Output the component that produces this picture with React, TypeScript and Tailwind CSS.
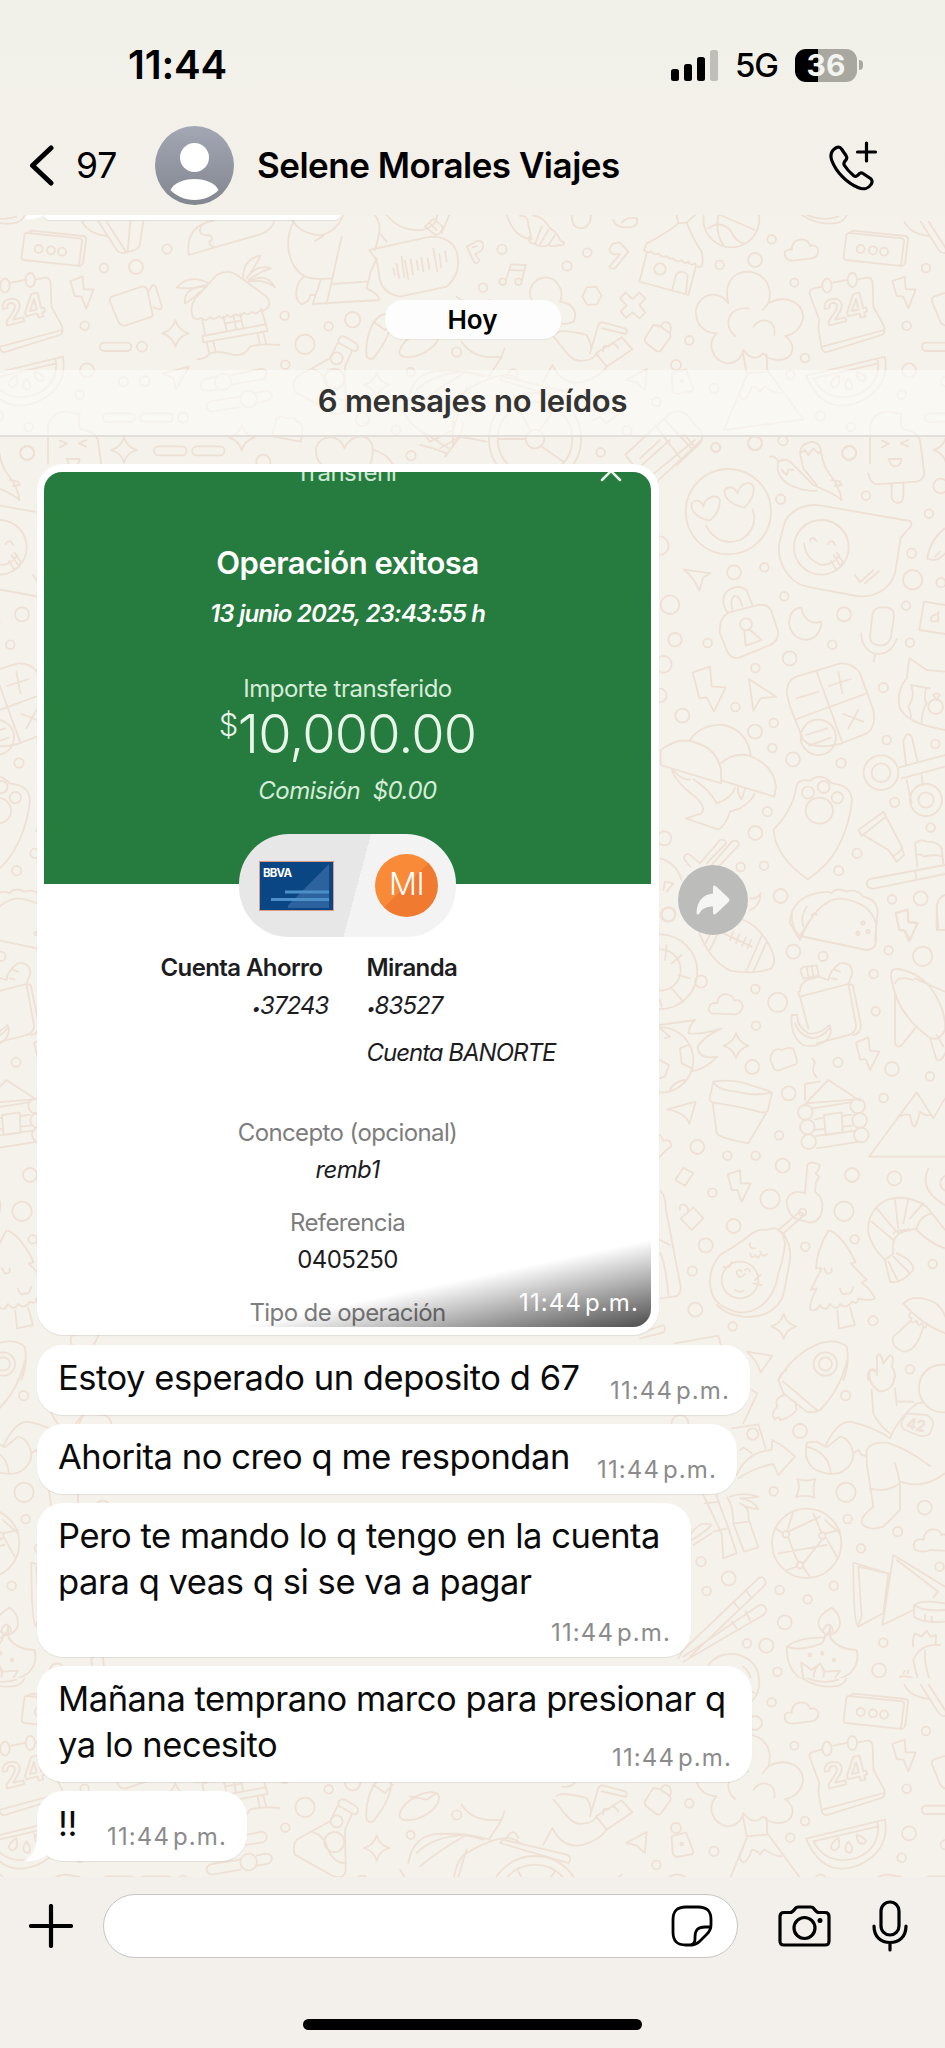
import type { ReactNode } from "react";

type Circle = [number, number, number];

interface Doodle {
  x: number;
  y: number;
  circles: Circle[];
  sparkles?: Circle[];
  paths: string[];
}

// Wallpaper doodles, drawn at 3x and scaled down in <Wallpaper />
const doodles: Doodle[] = [
  {
    x: 0,
    y: 200,
    circles: [
      [408, 201, 21], [501, 147, 14], [854, 347, 13], [986, 379, 13], [1058, 359, 23], [915, 433, 29],
      [856, 494, 13], [426, 440, 15], [370, 545, 14], [434, 543, 15], [549, 653, 15], [1087, 658, 20],
      [1188, 689, 13], [1233, 767, 14], [1232, 516, 12], [790, 785, 21], [669, 545, 25], [746, 597, 25],
      [1010, 475, 18], [1003, 537, 30],
    ],
    sparkles: [[526, 400, 40], [372, 750, 38], [725, 713, 38], [1130, 555, 38]],
    paths: [
      "M247 65Q262 100 320 108M296 65L350 150Q360 162 375 158L405 150Q418 145 420 130L430 65M320 65L378 155M391 65L383 155",
      "M640 62C570 75 560 120 566 165L780 103Q815 90 822 65M623 65C590 80 595 105 618 105C640 105 640 120 628 125Q628 138 642 141",
      "M880 65C850 130 865 200 915 230M870 45Q890 100 960 106Q1010 95 1030 45M1025 110L980 312M945 123L970 108M915 230Q940 240 995 235",
      "M1125 45C1150 80 1135 110 1125 150M912 230C885 250 880 300 905 313Q930 305 930 285L945 285M962 240L938 312L1138 300Q1140 285 1100 265L1112 215L1130 175M1000 252L1100 245",
      "M1108 150L1290 110Q1350 110 1368 150Q1390 215 1340 260L1200 290Q1150 280 1140 240L1130 180Z",
      "M1180 205l4 20M1190 192l7 42M1205 170l8 62M1215 182l10 56M1232 178l7 46M1250 182l5 28M1264 172l6 42M1283 175l5 32M1300 145l12 70M1318 162l6 40M1335 155l5 30",
      "M1160 45Q1200 95 1265 90Q1310 80 1312 45M1275 80l25-25l28 25q0 20-22 25zM1290 70l20 20",
      "M1140 100L1160 125M1325 100L1348 45",
      "M578 350Q565 310 600 280L650 225Q685 205 715 228L800 290Q815 310 803 325M578 350q12 15 25 3q12 15 27-2q13 13 27-3q12 13 25-3q12 12 25-3q12 12 25-4q12 11 24-3q12 11 22-2q14 3 25-12",
      "M607 360L615 405M783 325L797 372M670 350L680 392M720 340L730 385M675 370L725 362M700 345L708 387",
      "M607 408L797 373L803 393L610 427ZM620 427L628 460M640 425L648 458M773 402L780 435M790 398L798 430M592 478Q620 475 628 462Q650 450 690 462Q730 475 750 440Q780 430 838 435",
      "M730 238Q725 180 782 166Q765 200 745 228M740 235Q770 190 812 205Q780 215 745 240M745 245Q800 215 825 262Q790 235 745 245M625 250Q570 220 530 262Q570 270 615 255M620 260Q550 260 555 310Q575 300 600 275",
      "M335 290L425 260Q438 258 442 270L458 345Q458 350 450 352L375 377Q362 378 355 365L330 305Q328 293 335 290M445 275L458 255Q465 255 467 260L486 320Q485 328 478 328L460 322",
      "M312 428H382a12 12 0 0 1 0 25H312a12 12 0 0 1 0-25ZM322 640H392a13 13 0 0 1 0 26H322a13 13 0 0 1 0-26ZM434 640H505a13 13 0 0 1 0 26H434a13 13 0 0 1 0-26ZM476 739H546a13 13 0 0 1 0 27H476a13 13 0 0 1 0-27ZM590 739H660a13 13 0 0 1 0 27H590a13 13 0 0 1 0-27Z",
      "M488 520L567 500L527 570Q525 545 520 535Z",
      "M650 530L615 537Q600 545 602 560Q606 572 620 572L655 568M695 525L780 507Q798 505 800 520Q800 535 788 538L695 553M720 590L635 603Q618 608 620 622Q625 635 637 635L722 620M770 578L795 572Q815 572 816 587Q812 600 800 603L768 608",
      "M1015 420Q1020 405 1035 410L1068 430Q1078 440 1072 450Q1066 456 1055 450L1018 430ZM1012 430L990 475L890 530Q875 550 885 575L1000 640Q1035 650 1037 620L1035 500L1055 455M940 508Q970 515 985 560Q1000 600 1035 600",
      "M1100 470C1095 430 1110 350 1155 342C1185 345 1180 400 1120 475Q1105 480 1100 470M1198 455C1210 410 1290 370 1315 395C1330 430 1260 480 1210 470Q1198 465 1198 455M1120 365L1155 390L1178 365M1230 400L1280 410L1310 390",
      "M830 655Q845 645 862 655Q885 650 890 665Q908 668 908 685L902 725L820 710Q815 690 825 680Z",
      "M1033 745C1020 700 960 700 948 745Q945 775 965 795M1033 745C1055 695 1115 700 1118 745Q1120 770 1110 795",
      "M1225 600Q1240 510 1330 512Q1390 512 1450 530M1200 620Q1235 680 1260 690L1345 745M1250 570Q1300 520 1400 515Q1320 560 1260 610M1260 690L1290 725L1360 690L1400 560M1260 735L1300 745L1340 760M1120 750Q1160 760 1180 795",
    ],
  },
  {
    x: 440,
    y: 200,
    circles: [
      [186, 148, 14], [129, 263, 13], [381, 198, 14], [442, 158, 13], [660, 207, 17], [839, 195, 13],
      [945, 180, 21], [995, 118, 13], [1063, 248, 12], [1262, 147, 12], [1299, 151, 12], [1332, 155, 12],
      [1458, 204, 13], [1400, 377, 13], [1095, 474, 13], [1051, 524, 13], [1407, 511, 21], [1385, 584, 13],
      [1141, 648, 14], [1232, 681, 13], [1228, 759, 21], [945, 729, 21], [1029, 722, 14], [827, 743, 14],
      [822, 565, 14], [649, 606, 13], [561, 692, 14], [482, 757, 13], [748, 421, 13], [50, 456, 14],
      [285, 717, 28], [285, 717, 138], [285, 717, 112], [188, 245, 10], [235, 245, 10], [874, 58, 84],
      [708, 495, 15], [725, 543, 4],
    ],
    paths: [
      "M257 717H173M298 692L345 625M303 738L370 785M272 692L235 625",
      "M80 140L112 123Q130 120 130 140Q125 155 105 162L118 180Q115 192 103 188ZM98 142L112 138",
      "M198 240L213 193L257 195L246 240M211 210L254 212",
      "M200 45C215 90 240 115 275 118L265 75Q265 45 240 48M268 110Q262 130 285 132Q305 145 325 135Q340 142 355 135Q375 138 372 128L360 120Q350 95 330 85Q305 45 280 48M285 132L305 80M300 132L325 90M325 135L345 105",
      "M395 45Q395 85 425 85Q452 82 453 45M520 60Q525 85 570 82Q598 78 590 55Q560 50 545 68",
      "M508 200L540 163Q510 165 508 148Q515 125 540 128L565 155L525 205Q512 208 508 200",
      "M612 150L620 130Q680 100 715 70L740 68Q760 120 785 155Q792 190 783 200Q770 205 765 190Q752 200 745 185Q735 195 725 180Q710 190 700 175Q690 180 680 168Q665 175 655 160Q640 168 635 155Q620 160 612 150M620 160L598 245L745 285L768 198M697 270L708 225Q725 205 743 225L738 280M715 70L710 45M740 68L765 45",
      "M835 45Q825 100 850 135M840 45L945 90M805 85Q840 60 870 90Q890 130 915 130",
      "M1045 180Q1030 170 1035 155Q1045 145 1055 150Q1055 120 1085 118Q1108 120 1110 138Q1130 132 1135 150Q1135 172 1115 175L1060 182Z",
      "M1228 99L1386 115Q1393 117 1392 124L1384 190Q1382 198 1374 197L1218 180Q1210 178 1211 170L1219 106Q1221 98 1228 99M1228 99L1239 92L1396 108Q1405 110 1404 118L1396 186Q1392 198 1382 199",
      "M1085 45Q1140 80 1195 68Q1215 60 1220 45M1100 45Q1150 65 1195 50",
      "M1138 360L1110 285Q1105 270 1120 266L1145 260M1180 248L1220 240M1255 238L1285 232Q1297 235 1298 250L1300 320L1332 378Q1338 400 1325 405L1165 455Q1150 460 1145 445L1135 385L1138 360M1147 440L1332 390",
      "M1147 257a14 21 0 1 0 28 0a14 21 0 1 0-28 0M1223 240a14 21 0 1 0 28 0a14 21 0 1 0-28 0",
      "M1357 243L1394 230L1397 268L1427 268L1405 325L1390 290L1370 288Z",
      "M1098 527L1335 470Q1350 560 1260 605Q1150 650 1098 527M1120 535L1315 490Q1315 560 1250 585Q1160 610 1120 535M1195 525Q1160 550 1180 562Q1205 560 1195 525M1225 535Q1205 565 1230 570Q1245 560 1225 535M1250 515Q1250 545 1272 542Q1290 530 1250 515M1312 478L1315 490",
      "M865 310C850 250 880 215 925 215C975 220 1000 260 985 310C1030 285 1085 300 1090 350C1085 385 1060 405 1035 408C1070 430 1065 480 1015 480Q985 480 970 460Q940 490 910 450Q900 490 860 490C815 480 800 430 830 400C790 400 765 370 768 330C780 275 840 270 865 310M885 408C850 380 860 320 925 325M940 380C960 350 1010 355 1003 405M985 310L968 330M908 455L920 520L982 515L980 465",
      "M920 525L852 690L1090 658L985 515M910 555Q890 590 910 598Q925 595 935 560Q950 560 960 575Q970 560 975 560Q1000 580 1025 580",
      "M275 298C260 270 280 235 315 232C350 232 375 270 360 305C400 310 415 340 400 365Q380 375 365 370",
      "M440 262L468 260L485 287L470 313L442 314L427 290Z",
      "M540 295L556 277L578 297L598 277L616 295L598 315L616 338L598 355L578 337L558 354L542 335L560 316Z",
      "M450 460L475 375Q480 365 490 368L555 385Q565 392 558 402L485 385M468 460L545 412L577 448L500 500ZM490 455Q485 430 505 440Q520 420 535 445M350 400Q360 385 440 405Q460 440 450 460M340 410C370 440 390 490 430 482Q460 480 470 460",
      "M65 425Q100 480 185 470L150 525M185 470L193 445M310 545L337 495Q370 560 430 545Q480 530 500 500",
      "M0 515Q50 505 150 530M50 290Q80 320 150 300M40 740Q30 600 80 570Q200 500 240 540M180 540L385 600Q400 585 380 575L190 530ZM200 525Q220 490 235 525",
      "M615 415L640 375L660 378L690 400Q695 410 685 420L662 452Q655 458 645 450L620 430Q612 425 615 415M665 375Q670 362 685 368Q698 380 690 398",
      "M695 520L738 508L760 565Q760 575 750 575L710 582Q700 580 698 570Z",
      "M558 540L620 507L615 570Q600 560 592 548Z",
      "M555 765L690 640Q720 625 745 650L780 690Q795 715 775 735L710 795M645 675L725 780M560 770L580 795M670 655L755 745",
      "M460 660L480 650L500 670L545 635M0 745L60 710L140 725M15 770L60 710L70 670",
      "M1290 790L1290 680Q1300 635 1345 635L1385 642Q1375 690 1400 690Q1430 695 1440 720L1450 795M1325 722L1347 731L1325 742M1405 720L1382 730L1405 740M1345 777L1385 777Q1382 799 1365 799Q1350 799 1348 777",
    ],
  },
  {
    x: 640,
    y: 440,
    circles: [
      [227, 22, 13], [345, 10, 21], [627, 39, 21], [265, 215, 128], [422, 178, 14], [678, 167, 13],
      [867, 221, 13], [815, 340, 14], [818, 419, 29], [903, 428, 14], [58, 317, 28], [282, 397, 21],
      [373, 382, 13], [544, 322, 82], [433, 469, 13], [90, 494, 28], [612, 523, 21], [798, 497, 13],
      [810, 608, 13], [577, 614, 13], [105, 599, 20], [203, 609, 13], [449, 655, 21], [346, 684, 13],
      [70, 673, 25], [60, 766, 20], [730, 743, 14], [286, 801, 13], [127, 827, 21], [401, 849, 13],
      [345, 875, 21], [397, 924, 13], [459, 958, 21], [603, 969, 14], [740, 900, 13], [886, 912, 13],
      [535, 892, 53], [382, 1115, 14], [346, 1179, 21], [73, 1195, 21], [764, 1087, 14], [872, 1163, 13],
      [651, 1240, 14], [596, 1292, 14], [422, 1368, 21], [372, 1277, 13], [302, 1281, 13], [756, 1378, 13],
      [842, 1375, 21], [86, 1423, 21], [723, 998, 52], [723, 998, 28], [858, 1080, 48], [858, 1080, 23],
      [902, 138, 22], [504, 1058, 18], [551, 1041, 18], [592, 1073, 17], [318, 553, 18], [669, 1449, 5],
      [654, 1480, 5], [684, 1475, 5], [887, 800, 22],
    ],
    paths: [
      "M0 55L60 0M0 80L90 0M30 110L165 0M45 130L185 0M130 -20L160 15",
      "M685 100Q690 130 710 133L830 125Q855 118 853 95L848 70M755 135V175Q765 195 785 185Q792 180 790 130",
      "M390 50Q405 45 415 65Q440 50 460 75L520 135Q590 165 605 180Q600 140 560 90Q545 60 542 25Q530 0 505 8Q480 15 480 40L490 85L530 135M415 65Q405 110 450 135Q490 155 530 152M480 40L495 30L505 45L520 25L535 40L543 30M425 90L440 105L445 88L460 90M575 120L600 125L605 135L585 138",
      "M210 242C170 235 150 210 155 190C165 175 185 182 190 200C195 170 230 160 240 180C240 205 230 225 210 242ZM313 202C270 195 250 170 255 150C265 135 285 142 293 160C298 128 335 120 341 142C342 165 333 185 313 202ZM198 257C220 300 260 315 300 300C340 280 350 240 338 208",
      "M430 260C440 215 490 190 540 196L810 243Q818 250 812 260L782 293L765 400C750 450 700 475 650 468L500 440C440 425 410 360 418 310Z",
      "M493 310Q495 355 540 373Q575 380 598 345M510 303Q515 285 530 303M563 312Q575 292 585 315M590 338L608 365Q605 385 588 387L573 363M580 345L600 375M645 405L660 427L700 390M675 430L717 393",
      "M130 388L212 400L190 412L178 452Q160 410 130 388",
      "M262 517Q238 480 260 455Q290 430 320 450L337 495M277 508Q270 480 282 468Q300 465 307 500M265 518L355 495Q385 490 395 515L413 570Q420 600 390 615L300 652Q275 660 262 635L240 580Q235 535 265 518M313 570L317 617L365 600L327 567",
      "M483 503Q450 505 447 550C455 600 500 608 525 590Q545 570 544 545Q500 560 483 503",
      "M718 502H740Q762 505 762 530L752 595Q740 620 715 616Q688 610 690 590L697 525Q702 505 718 502M664 580Q662 620 700 640Q750 650 770 597M706 642L701 665",
      "M862 355Q870 300 915 265M862 355Q890 370 915 340M885 350L900 335M915 582L838 570L852 485L915 495M895 522Q870 525 873 540Q880 550 895 540V515V545",
      "M158 697L210 680L215 740L257 742L222 815L200 772L178 775Z",
      "M327 717L408 770L362 775L340 812Z",
      "M440 760Q440 720 470 710L600 670Q640 668 660 700L700 810Q710 860 680 880L600 912Q520 930 490 900L450 800ZM530 695L607 908M470 837L675 762M470 775L535 755M567 738L632 717M595 695L607 760M610 822L670 845M625 865L655 810M498 885L562 865M507 917L572 893",
      "M778 800Q770 750 800 715L808 655L860 690L915 695M778 800Q795 850 915 870M812 735L870 745M815 740Q825 770 805 800Q815 820 812 835M858 745Q850 780 860 790Q845 815 845 845M880 765Q890 755 900 765L890 780Z",
      "M148 902Q185 850 250 855Q320 870 332 945M62 930Q110 895 150 903Q230 920 243 990V1030L62 975ZM243 970Q275 940 320 945Q400 970 408 1040L403 1070L245 1022M95 990Q110 1030 165 1070Q200 1100 185 1120L137 1135L235 1168Q255 1160 270 1115L300 1105Q340 1080 343 1060M160 1018Q210 1050 230 1090Q275 1075 285 1045M295 1040Q290 1060 305 1078L315 1048M100 990Q130 1025 150 1018",
      "M497 1112a40 38 0 1 0 82 0a40 38 0 1 0-82 0M401 1168Q460 1110 470 1035Q480 1015 510 1022Q545 995 575 1030Q640 1035 635 1090Q620 1200 560 1270Q530 1300 503 1318Q405 1250 401 1168",
      "M778 982L915 945M785 1015L915 980M798 975L790 905Q800 870 815 890L833 965M800 1020L815 1090M845 1005L848 1035",
      "M655 1170L730 1115L738 1130L665 1188ZM670 1185L745 1230L760 1250L788 1225L738 1130M755 1245L770 1265L792 1245L785 1225",
      "M915 1275L690 1317Q675 1325 683 1340Q690 1348 705 1345L915 1302M825 1292L830 1318M832 1280L825 1210Q840 1195 860 1205Q895 1205 905 1225L910 1270M830 1245Q845 1240 850 1250Q890 1240 905 1250",
      "M133 1258Q130 1240 148 1243L180 1270L240 1200Q255 1195 258 1210L200 1270M133 1258L150 1280M215 1275L275 1205Q295 1195 297 1215L240 1275",
      "M450 1450Q450 1390 510 1365Q560 1350 575 1360Q590 1340 620 1355Q650 1345 670 1370Q715 1380 713 1420L705 1500M450 1450L480 1500Q530 1380 600 1375Q690 1385 708 1450M500 1400Q480 1430 490 1460M515 1425q10-10 15 0",
      "M767 1418L803 1408L805 1445L833 1448L810 1500L795 1472L778 1470ZM890 1400Q895 1370 915 1365M890 1400L895 1470H915M62 1255Q110 1270 125 1320M70 1350L75 1325L100 1330L80 1355M330 1375Q350 1380 362 1360Q360 1400 330 1410",
    ],
  },
  {
    x: 640,
    y: 900,
    circles: [
      [84, 44, 21], [460, 155, 21], [549, 169, 14], [746, 151, 13], [848, 169, 29], [701, 222, 13],
      [346, 267, 13], [413, 307, 29], [348, 377, 13], [707, 334, 13], [337, 501, 21], [594, 487, 14],
      [756, 507, 21], [870, 529, 13], [446, 580, 21], [731, 594, 13], [417, 706, 13], [172, 741, 21],
      [262, 767, 13], [347, 767, 13], [428, 797, 21], [636, 825, 21], [763, 835, 21], [217, 878, 13],
      [390, 897, 29], [612, 934, 29], [281, 978, 21], [197, 1036, 21], [496, 1040, 13], [644, 1018, 13],
      [878, 1092, 13], [157, 1113, 14], [166, 1229, 21], [278, 1279, 13], [699, 1262, 14], [300, 1140, 55],
      [496, 637, 22], [502, 681, 22], [506, 725, 22], [653, 618, 22], [659, 661, 22], [664, 705, 22],
      [488, 937, 11], [556, 1392, 35], [556, 1392, 20], [810, 1408, 13], [183, 245, 18], [60, 210, 62],
      [60, 215, 112], [62, 480, 98], [925, 850, 24],
    ],
    sparkles: [[288, 437, 38], [431, 1279, 38]],
    paths: [
      "M178 100Q210 180 270 212Q340 225 395 205Q412 180 390 140Q360 80 310 60M193 135L215 95M207 155L235 98M318 215L365 108M340 215L380 125M250 100L335 140M280 95L270 120M298 103L288 130M318 112L306 138M333 120L322 145",
      "M455 40Q455 90 480 108L680 150Q705 150 708 125V60M480 108L510 60",
      "M767 40L803 30L805 67L833 70L807 125L793 92L778 90ZM890 20V90H915M80 135L75 180M125 165L95 190M150 235L115 225M95 265L130 305M60 300L65 320",
      "M215 340Q200 330 210 315Q220 305 232 310Q235 280 260 283Q280 285 282 302Q305 295 308 320Q305 340 285 343Z",
      "M60 375L165 360Q150 370 145 400Q180 405 245 385Q190 410 173 440Q175 480 232 470Q195 510 150 515M60 385L90 410L75 415M145 435L120 445L125 490L155 505M60 480L87 495L75 530L60 535M90 570Q100 545 135 540",
      "M220 545Q280 535 340 558Q380 570 396 577Q340 590 290 575Q230 570 220 545L210 590Q205 605 220 608Q300 620 365 637Q385 640 385 625L396 577M218 608L230 700Q240 715 325 730L378 640",
      "M82 628L167 605L148 672Q140 640 82 628M60 705L70 722Q95 715 93 740Q75 750 60 770",
      "M480 275Q480 240 520 235L535 230L565 240M480 290L625 252L648 375Q648 400 625 405L530 430M480 290L505 385M475 275Q475 285 480 290M625 252L638 255L662 370Q665 400 640 405M482 215Q480 200 500 200L530 196L537 228L490 235ZM500 200L505 230M515 198L520 228M565 240Q570 210 600 190Q635 185 637 220L625 252M585 210L600 215M575 235L590 238",
      "M455 345L472 345Q470 380 505 400Q540 405 568 375Q580 395 560 420Q530 445 490 435Q450 410 455 345M465 370Q480 410 520 415Q550 410 568 385",
      "M393 465Q405 440 425 450Q445 440 460 445L472 485Q470 495 460 495L415 512Q400 512 398 495Q388 480 393 465",
      "M648 428L685 412L690 452L718 455L690 510L678 478L660 478Z",
      "M515 475Q530 485 520 500Q515 515 530 532M497 610L565 540L660 602M497 610L648 598M495 600V552L540 545M518 625L632 607M525 658L552 653M608 648L635 644M525 690L553 687M608 680L640 676M530 745L660 725M528 708L645 692M552 645L605 637L608 698L557 705Z",
      "M687 770L830 577L880 655L915 595M687 770H915M775 650Q800 640 810 645Q815 680 825 680Q835 660 840 635Q860 650 870 645",
      "M755 240Q745 205 775 207Q830 215 870 260Q920 330 915 390Q895 430 865 410Q770 340 755 240M765 250Q775 225 820 240M825 235L915 275M765 280V430Q775 450 790 430L825 385M870 415L890 480Q905 485 915 460M890 405L910 440",
      "M130 803L160 820L135 857L106 840ZM263 823L300 810L302 850L332 850L305 905L292 870L275 870Z",
      "M122 955L160 922L190 955L155 990ZM120 930Q115 910 135 915Q148 920 142 940",
      "M62 875Q75 880 78 930L122 1160Q122 1190 100 1190L62 1195M60 1020L90 1035M60 1060Q75 1080 85 1185",
      "M495 880L502 795Q510 780 540 795L535 810L527 820L537 830L528 848L525 875Q550 895 547 920Q545 965 510 968L480 960Q440 950 440 900Q455 865 495 880M430 1000L415 990L480 935L492 945Z",
      "M380 990Q425 970 435 1030Q430 1080 415 1120C400 1220 320 1260 260 1225C200 1200 195 1120 240 1065Q300 1030 330 1005Q355 985 380 990M430 1000Q455 1040 450 1080L435 1160C430 1220 380 1255 310 1250Q260 1245 230 1215M330 1030Q325 1045 345 1045M360 1055Q370 1075 382 1062M330 1060Q335 1080 345 1065Q355 1080 360 1065M250 1100Q270 1110 275 1085M345 1140Q355 1130 362 1125M340 1150L365 1155M290 1115Q300 1105 305 1115M315 1110Q325 1100 330 1115M290 1120Q300 1140 315 1122M285 1170Q300 1180 310 1172",
      "M565 992Q530 1050 528 1105L545 1105L512 1170L530 1165Q505 1215 512 1230Q530 1235 540 1215Q555 1240 570 1212Q590 1235 600 1212Q620 1230 635 1205Q655 1215 655 1195Q690 1205 705 1195Q690 1165 665 1148L680 1140L632 1090L647 1087Q610 1010 570 992M553 1105Q560 1130 575 1115V1105M600 1165Q605 1190 620 1180Q635 1185 640 1160M592 1232L597 1285L645 1275L630 1222",
      "M685 1000Q680 930 740 900Q800 880 860 920L915 990M685 1000Q700 1050 735 1080L760 1060Q750 1010 790 995L830 985M695 965L760 1020M710 925L765 990M765 900L775 985M805 895L790 970M850 910L810 955M735 1080L750 1145Q780 1155 820 1110Q820 1080 770 1060M745 1085L775 1145M760 1070L810 1120M830 990Q835 950 875 940M830 990Q870 1030 915 1045M865 805Q835 870 915 915M762 1000q8-15 12-2q8-14 12-2q8-14 12-2q8-14 12-2",
      "M790 1210Q820 1180 880 1205Q910 1225 915 1250M790 1210Q840 1270 915 1300M815 1235Q800 1250 815 1255Q810 1275 830 1262Q835 1285 845 1270Q860 1295 860 1270M810 1265L760 1310Q750 1340 790 1355Q830 1355 850 1280",
      "M0 1300L70 1275Q80 1285 70 1298L0 1315M105 1330L235 1307L243 1335M320 1355L397 1367L362 1418Q350 1380 320 1355",
      "M415 1440Q460 1360 540 1330Q590 1315 620 1340Q630 1390 610 1440M685 1440Q680 1420 690 1410L712 1415L710 1370Q720 1350 730 1390L750 1365Q765 1370 755 1400Q770 1420 760 1440M840 1440Q860 1390 915 1395",
    ],
  },
  {
    x: 640,
    y: 1360,
    circles: [
      [617, 107, 14], [480, 213, 21], [401, 394, 13], [618, 397, 29], [854, 443, 21], [623, 477, 13],
      [773, 515, 14], [500, 550, 104], [663, 565, 13], [183, 605, 14], [266, 655, 21], [581, 677, 13],
      [200, 693, 13], [419, 690, 13], [503, 718, 13], [434, 787, 21], [899, 620, 13], [730, 848, 13],
      [321, 850, 13], [379, 857, 21], [717, 931, 21], [412, 935, 13], [338, 222, 17], [438, 523, 10],
      [547, 527, 10], [480, 616, 10], [909, 85, 72], [510, 884, 4], [547, 880, 4], [582, 900, 4],
      [120, 190, 25],
    ],
    paths: [
      "M472 357Q498 366 526 357Q516 385 524 413Q498 403 468 411Q483 385 472 357",
      "M415 60Q420 40 440 30M415 60L430 100L500 155Q525 160 540 150Q600 90 622 0M430 65L530 150M438 105Q400 110 412 140Q390 160 403 178Q420 165 420 180Q450 175 470 150L465 125",
      "M690 30Q680 70 720 95Q765 90 765 40M712 45Q705 20 690 30M695 90L700 160Q720 200 750 220M765 85L770 135M770 125L820 125M555 260Q590 185 630 185Q700 200 750 235Q770 180 830 130L850 128M500 250Q490 300 520 325Q560 350 600 338Q640 320 640 280Q630 235 600 230L560 262L530 245Q505 245 500 250M500 260Q570 280 572 340M640 280L655 270L665 285L680 288M680 270Q690 245 740 248Q800 265 870 318M680 270V310L700 440Q660 470 665 490Q685 515 730 500L780 450V370Q775 340 765 310M690 385Q740 400 780 370M780 365Q850 390 915 340M800 160L860 165Q880 175 880 195L870 220Q860 230 840 228L795 210Q780 200 785 185Z",
      "M290 345Q320 275 395 270L397 240Q435 260 465 290L415 345L400 312Q350 320 295 355M275 205L355 193L377 265M300 270L310 262L335 280M335 90L352 100L310 190",
      "M190 405L245 520L250 595L290 580L262 495L235 425L230 405M195 430L238 425M220 515L262 505M262 412Q280 440 280 490L312 575L355 562L325 475Q330 440 300 430M285 490L325 485M270 410Q310 395 355 410Q330 415 300 415Q340 420 355 447Q320 445 300 430M160 555L215 520M155 520Q180 480 215 495Q190 520 155 540",
      "M445 515L540 470M445 530Q460 580 475 605M490 610L545 540M405 505L430 520M415 580L560 555M440 515L460 455M545 520L520 460M555 520L600 510M560 535L590 590M470 620L440 630M490 622L510 650M555 480L600 520",
      "M825 570Q815 550 830 540Q845 535 850 540Q855 505 885 508Q900 510 905 525Q915 520 915 525M825 570Q850 580 870 570L915 572",
      "M640 608L745 640L730 760L655 800Q640 790 640 608M655 620L665 770L655 795M745 640L655 620M760 585L727 795L820 750M760 585L915 680M770 600L895 695L880 712M822 735Q850 718 915 730M822 735V770Q850 790 915 785M822 735Q850 755 915 750M855 765v12M875 770v12",
      "M115 895L130 870L355 655Q370 645 377 665Q378 675 370 680L150 890M130 905L370 765Q382 755 378 745Q370 730 355 737L130 890M317 690L335 715M280 725L297 745M317 755L330 780M275 785L290 805",
      "M440 860Q480 830 550 833Q570 820 570 800L572 835Q600 870 650 870Q660 910 630 940Q580 975 500 965Q440 940 440 860M440 860Q480 875 545 850Q555 840 555 825M535 790Q535 765 575 743Q600 760 600 790Q600 815 570 825Q540 820 535 790M550 815Q550 800 565 793Q580 800 578 815M483 907L515 930L540 910L555 935L600 932L580 962M483 907L490 955L520 960Q520 930 540 910Q560 940 545 965M485 965Q500 985 580 975",
      "M820 900Q840 850 900 855M820 860Q815 840 825 820L845 830L860 812L872 830L888 825L887 855M820 900Q830 980 900 1065M855 870Q850 950 915 1050M860 1010Q800 1000 780 950Q805 945 830 960M790 940l5-8M803 940l2-9",
      "M205 915Q235 875 290 883Q355 900 357 960L340 1020M310 920Q340 940 335 1010",
    ],
  },
];

function sparklePath([cx, cy, r]: Circle) {
  const k = r * 0.22;
  return `M${cx} ${cy - r}Q${cx + k} ${cy - k} ${cx + r} ${cy}Q${cx + k} ${cy + k} ${cx} ${cy + r}Q${cx - k} ${cy + k} ${cx - r} ${cy}Q${cx - k} ${cy - k} ${cx} ${cy - r}`;
}

const COPIES = [
  [-822, 0], [0, 0], [822, 0],
  [-822, 1463], [0, 1463], [822, 1463],
];

function Wallpaper() {
  return (
    <svg
      className="absolute inset-0 h-full w-full"
      viewBox="0 215 945 1662"
      fill="none"
      stroke="#eee0d5"
      strokeWidth={5.4}
      strokeLinecap="round"
      strokeLinejoin="round"
      aria-hidden="true"
    >
      <defs>
        <g id="doodles">
          {doodles.map((d) => (
            <g key={`${d.x}-${d.y}`} transform={`translate(${d.x} ${d.y}) scale(0.33333)`}>
              {d.circles.map(([cx, cy, r], i) => (
                <circle key={i} cx={cx} cy={cy} r={r} />
              ))}
              {d.sparkles?.map((s, i) => <path key={i} d={sparklePath(s)} />)}
              {d.paths.map((p, i) => (
                <path key={i} d={p} />
              ))}
            </g>
          ))}
          <text
            x="846"
            y="321"
            fontSize="34"
            strokeWidth="1.6"
            fontWeight="700"
            textAnchor="middle"
            transform="rotate(-14 846 310)"
            fontFamily="Inter, sans-serif"
          >
            24
          </text>
        </g>
        <clipPath id="upper">
          <rect x="0" y="215" width="945" height="1463" />
        </clipPath>
        <clipPath id="lower">
          <rect x="0" y="1678" width="945" height="200" />
        </clipPath>
      </defs>
      {COPIES.map(([x, y]) => (
        <g key={`${x}-${y}`} clipPath={y ? "url(#lower)" : "url(#upper)"}>
          <use href="#doodles" x={x} y={y} />
        </g>
      ))}
      <text
        x="916"
        y="1430"
        fontSize="15"
        strokeWidth="1"
        textAnchor="middle"
        transform="rotate(12 916 1425)"
        fontFamily="Inter, sans-serif"
      >
        42
      </text>
    </svg>
  );
}

function StatusBar() {
  return (
    <div className="flex h-[126px] items-start justify-between pt-[45px] pr-[82px] pl-[128px]">
      <span className="text-[40px] leading-[40px] font-semibold tracking-[-0.2px] text-black">11:44</span>
      <div className="flex h-[40px] items-center">
        <div className="flex h-[31px] items-end gap-[5px]">
          <span className="h-[12px] w-[8px] rounded-[2.5px] bg-black" />
          <span className="h-[17px] w-[8px] rounded-[2.5px] bg-black" />
          <span className="h-[24px] w-[8px] rounded-[2.5px] bg-black" />
          <span className="h-[31px] w-[8px] rounded-[2.5px] bg-[#bfbfb9]" />
        </div>
        <span className="ml-[17px] text-[33px] leading-[40px] font-medium tracking-[-1px] text-black">5G</span>
        <div className="ml-[17px] flex h-[33px] w-[62px] items-center justify-center overflow-hidden rounded-[11px] bg-linear-to-r from-black from-37% to-[#a8a8a1] to-37%">
          <span className="text-[30px] leading-none font-bold text-[#f3f4ee]">36</span>
        </div>
        <span className="ml-[2px] h-[10px] w-[4px] rounded-r-full bg-[#a8a8a1]" />
      </div>
    </div>
  );
}

function ChatHeader() {
  return (
    <div className="flex h-[79px] items-center pl-[29px]">
      <svg className="h-[41px] w-[25px]" viewBox="0 0 25 41" fill="none" stroke="#000" strokeWidth="5" strokeLinecap="round" strokeLinejoin="round">
        <path d="M22 3L3.5 20.5L22 38" />
      </svg>
      <span className="ml-[22px] w-[41px] text-[35.5px] leading-[40px] text-black">97</span>
      <svg className="ml-[38px] size-[79px]" viewBox="0 0 79 79">
        <defs>
          <linearGradient id="avatar" x1="0" y1="0" x2="0" y2="1">
            <stop offset="0" stopColor="#a3a7b4" />
            <stop offset="1" stopColor="#828690" />
          </linearGradient>
        </defs>
        <circle cx="39.5" cy="39.5" r="39.5" fill="url(#avatar)" />
        <circle cx="39.5" cy="31.5" r="14.5" fill="#fff" />
        <path d="M15.5 64C19 57 28 53 39.5 53S60 57 63.5 64C58 70 49 74 39.5 74S21 70 15.5 64Z" fill="#fff" />
      </svg>
      <h1 className="ml-[23px] w-[571px] pb-[2px] text-[35px] leading-[44px] font-semibold tracking-[-0.5px] whitespace-nowrap text-black">
        Selene Morales Viajes
      </h1>
      <svg className="h-[50px] w-[50px]" viewBox="0 0 50 50" fill="none" stroke="#000" strokeWidth="3.2" strokeLinecap="round" strokeLinejoin="round">
        <path d="M38.5 2V20M29.5 11H47.5" />
        <path d="M7 7.5C9 5.5 12 5.5 13.5 8L18 14.5C19.3 16.5 19 18 17.5 19.5C15.5 21.5 15.5 23 16.5 24.5C19 28.5 22 31.5 25.5 34.5C27.5 36 29 35.5 30.5 33.5C31.5 32 33.5 31.5 35 32.5L42.5 37.5C44.5 39 44.5 41.5 43 43.5C40.5 47.5 35.5 49 30 46.5C19 42 8 31 3.8 19.5C2 14.5 3.5 10 7 7.5Z" />
      </svg>
    </div>
  );
}

function Time({ className = "" }: { className?: string }) {
  return (
    <span className={`flex gap-[3px] text-[24px] leading-[28px] tracking-[1.1px] whitespace-nowrap ${className}`}>
      <span>11:44</span>
      <span>p.m.</span>
    </span>
  );
}

interface BubbleProps {
  className: string;
  children: ReactNode;
}

function Bubble({ className, children }: BubbleProps) {
  return (
    <div
      className={`relative flex justify-between rounded-[26px] bg-white pl-[21px] text-[34.5px] leading-[46px] tracking-[-0.45px] whitespace-nowrap text-[#0b0b0b] shadow-[0_1px_1px_rgba(0,0,0,0.08)] ${className}`}
    >
      {children}
    </div>
  );
}

function AccountNumber({ digits }: { digits: string }) {
  return (
    <p className="mt-[6px] tracking-[-0.9px] italic">
      <span className="text-[16px]">•</span>
      {digits}
    </p>
  );
}

function TransferReceipt() {
  return (
    <div className="relative flex h-[855px] w-[607px] flex-col overflow-hidden rounded-[18px] bg-white text-[24px] leading-[32px] tracking-[-0.6px]">
      <div className="flex h-[412px] shrink-0 flex-col items-center bg-[#267b3e] text-white">
        <div className="relative -mt-[15px] flex w-full justify-center">
          <span className="text-[#cfe8d4]">Transferir</span>
          <svg className="absolute top-[3px] right-[29px] size-[22px]" viewBox="0 0 22 22" fill="none" stroke="#e6f4e8" strokeWidth="2.5" strokeLinecap="round">
            <path d="M2 2L20 20M20 2L2 20" />
          </svg>
        </div>
        <p className="mt-[52px] text-[31px] leading-[44px] font-semibold tracking-[-0.5px]">Operación exitosa</p>
        <p className="mt-[13px] font-semibold tracking-[-0.8px] italic">13 junio 2025, 23:43:55 h</p>
        <p className="mt-[43px] tracking-[-0.5px] text-[#d5edd9]">Importe transferido</p>
        <p className="mt-[1px] flex h-[56px] items-start font-light text-[#e8f6ea]">
          <span className="mt-[3px] text-[31px] leading-[32px]">$</span>
          <span className="text-[54px] leading-[56px] tracking-[-0.9px]">10,000.00</span>
        </p>
        <p className="mt-[13px] whitespace-pre tracking-[-0.5px] text-[#d5edd9] italic">Comisión  $0.00</p>
      </div>

      {/* Origin and destination accounts */}
      <div className="relative -mt-[50px] ml-[195px] flex h-[103px] w-[217px] shrink-0 items-center justify-between rounded-[50px] bg-linear-105 from-[#e7e7e8] from-54% to-[#f3f3f4] to-54% pr-[18px] pl-[20px]">
        <svg className="h-[50px] w-[75px]" viewBox="0 0 75 50">
          <rect x="0.5" y="0.5" width="74" height="49" fill="#0b4684" stroke="#d99a86" />
          <path d="M29 44.5L70 3V47H29Z" fill="#3b6ea8" opacity="0.7" />
          <path d="M26 31H70M12 38.5H70" stroke="#4d8fc8" strokeWidth="3" />
          <text x="4" y="16" fill="#fff" fontSize="11.5" fontWeight="700" letterSpacing="-0.8" fontFamily="Inter, sans-serif">
            BBVA
          </text>
        </svg>
        <div className="flex size-[63px] items-center justify-center rounded-full bg-linear-135 from-[#f88a38] from-50% to-[#f07a30] to-50% pb-[3px] text-[31px] font-light text-white">
          MI
        </div>
      </div>

      <div className="mt-[15px] grid grid-cols-2 gap-x-[38px] text-[#1d1d1f]">
        <div className="text-right">
          <p className="pr-[6px] font-semibold">Cuenta Ahorro</p>
          <AccountNumber digits="37243" />
        </div>
        <div>
          <p className="font-semibold">Miranda</p>
          <AccountNumber digits="83527" />
          <p className="mt-[13px] tracking-[-1px] italic">Cuenta BANORTE</p>
        </div>
      </div>

      <div className="mt-[48px] flex flex-col items-center text-[#1d1d1f]">
        <p className="text-[#7d7d7d]">Concepto (opcional)</p>
        <p className="mt-[5px] italic">remb1</p>
        <p className="mt-[21px] text-[#7d7d7d]">Referencia</p>
        <p className="mt-[5px]">0405250</p>
        <p className="mt-[21px] text-[#7d7d7d]">Tipo de operación</p>
      </div>

      <div className="absolute right-0 bottom-0 h-[110px] w-[420px] bg-[linear-gradient(168deg,transparent_56%,rgba(0,0,0,0.7)_100%)]" />
      <Time className="absolute right-[12px] bottom-[10px] text-white" />
    </div>
  );
}

function Composer() {
  return (
    <footer className="h-[171px] bg-[#f3f0eb]">
      <div className="flex items-center pt-[17px] pl-[29px]">
        <svg className="size-[44px]" viewBox="0 0 44 44" stroke="#000" strokeWidth="4.2" strokeLinecap="round">
          <path d="M22 2V42M2 22H42" />
        </svg>
        <div className="ml-[30px] flex h-[64px] w-[635px] items-center justify-end rounded-full border border-[#c6c5c4] bg-white pr-[24px]">
          <svg className="size-[42px]" viewBox="0 0 42 42" fill="none" stroke="#000" strokeWidth="2.8" strokeLinejoin="round">
            <path d="M15 2H27C36 2 40 6 40 15V20C40 24 39 26 36 29L29 36C26 39 24 40 20 40H15C6 40 2 36 2 27V15C2 6 6 2 15 2Z" />
            <path d="M40 22H34C27 22 24 25 24 32V34C24 37 23 39 20 40" />
          </svg>
        </div>
        <svg className="ml-[40px] h-[42px] w-[53px]" viewBox="0 0 53 42" fill="none" stroke="#000" strokeWidth="3.2" strokeLinejoin="round">
          <path d="M6 7.5H12C14 7.5 15 6.5 16.5 4.5C17.5 2.5 18.5 2 20.5 2H32.5C34.5 2 35.5 2.5 36.5 4.5C38 6.5 39 7.5 41 7.5H47C50 7.5 51 9 51 11.5V36C51 39 50 40 47 40H6C3 40 2 39 2 36V11.5C2 9 3 7.5 6 7.5Z" />
          <circle cx="26.5" cy="23" r="10.5" />
          <circle cx="42" cy="15.5" r="2.5" fill="#000" stroke="none" />
        </svg>
        <svg className="ml-[41px] h-[52px] w-[36px]" viewBox="0 0 36 52" fill="none" stroke="#000" strokeWidth="3.2" strokeLinecap="round">
          <rect x="9" y="2" width="18" height="33" rx="9" />
          <path d="M2 26C2 37 9 42.5 18 42.5S34 37 34 26M18 42.5V50" />
        </svg>
      </div>
      <div className="mx-auto mt-[61px] h-[11px] w-[339px] rounded-full bg-black" />
    </footer>
  );
}

export default function App() {
  return (
    <div className="flex h-[2048px] w-[945px] flex-col overflow-hidden bg-[#f5f2eb] font-['Inter',sans-serif]">
      <header className="h-[215px] shrink-0 bg-linear-to-b from-[#f1f1e9] to-[#f4f0ea]">
        <StatusBar />
        <ChatHeader />
      </header>

      <main className="relative h-[1662px] shrink-0 overflow-hidden bg-[#f5f2eb]">
        <Wallpaper />
        <div className="relative flex flex-col items-start">
          {/* Bottom edge of the previous message */}
          <div className="flex h-[5px] items-start pl-[24px]">
            <svg className="h-[5px] w-[20px]" viewBox="0 0 20 5" fill="#fff">
              <path d="M3 0H20Q12 5 0 4.5Z" />
            </svg>
            <div className="h-[5px] w-[296px] rounded-b-[20px] bg-white shadow-[0_1px_1px_rgba(0,0,0,0.08)]" />
          </div>

          <div className="mt-[80px] flex h-[39px] w-[176px] items-center justify-center self-center rounded-[18px] bg-[#fefdfd] text-[26px] font-semibold text-black shadow-[0_1px_1px_rgba(0,0,0,0.06)]">
            Hoy
          </div>

          <div className="mt-[31px] flex h-[67px] w-full items-center justify-center border-b-2 border-[#e2dfda] bg-[#fafaf8]/65 pb-[2px] text-[31px] font-semibold tracking-[-0.25px] text-[#333331]">
            6 mensajes no leídos
          </div>

          <div className="mt-[27px] flex items-center gap-[19px] pl-[37px]">
            <div className="h-[871px] w-[622px] rounded-[26px] bg-white p-[7px] pt-[8px] shadow-[0_1px_1px_rgba(0,0,0,0.08)]">
              <TransferReceipt />
            </div>
            <div className="flex size-[70px] items-center justify-center rounded-full bg-[#bcbcbb]">
              <svg className="h-[30px] w-[34px]" viewBox="0 0 34 30" fill="#f5f5f4">
                <path d="M17 2.5C17 0.5 18.5 0 20 1.2L32.5 13C33.8 14.3 33.8 15.7 32.5 17L20 28.8C18.5 30 17 29.5 17 27.5V21.5C10 21.5 6 23.5 3.5 28.5C2 30.5 0.5 29.5 0.5 27.5C1 16.5 6.5 9.5 17 8.5Z" />
              </svg>
            </div>
          </div>

          <div className="mt-[10px] flex flex-col items-start gap-[9px] pl-[37px]">
            <Bubble className="h-[70px] w-[713px] pt-[10px]">
              <p>Estoy esperado un deposito d 67</p>
              <Time className="mt-[22px] pr-[20px] text-[#8b8b8b]" />
            </Bubble>
            <Bubble className="h-[70px] w-[700px] pt-[10px]">
              <p>Ahorita no creo q me respondan</p>
              <Time className="mt-[22px] pr-[20px] text-[#8b8b8b]" />
            </Bubble>
            <Bubble className="h-[154px] w-[654px] flex-col pt-[10px]">
              <p>
                Pero te mando lo q tengo en la cuenta
                <br />
                para q veas q si se va a pagar
              </p>
              <Time className="mb-[10px] self-end pr-[20px] text-[#8b8b8b]" />
            </Bubble>
            <Bubble className="h-[116px] w-[715px] pt-[10px]">
              <p className="w-0">
                Mañana temprano marco para presionar q
                <br />
                ya lo necesito
              </p>
              <Time className="mt-[68px] pr-[20px] text-[#8b8b8b]" />
            </Bubble>
            <Bubble className="h-[70px] w-[210px] pt-[10px]">
              <svg className="absolute bottom-0 -left-[14px] h-[28px] w-[30px]" viewBox="0 0 30 28" fill="#fff">
                <path d="M14 0C14 15 10 23 1 27.5C12 29 20 26 25 21Z" />
              </svg>
              <p className="relative">!!</p>
              <Time className="mt-[22px] pr-[20px] text-[#8b8b8b]" />
            </Bubble>
          </div>
        </div>
      </main>

      <Composer />
    </div>
  );
}
